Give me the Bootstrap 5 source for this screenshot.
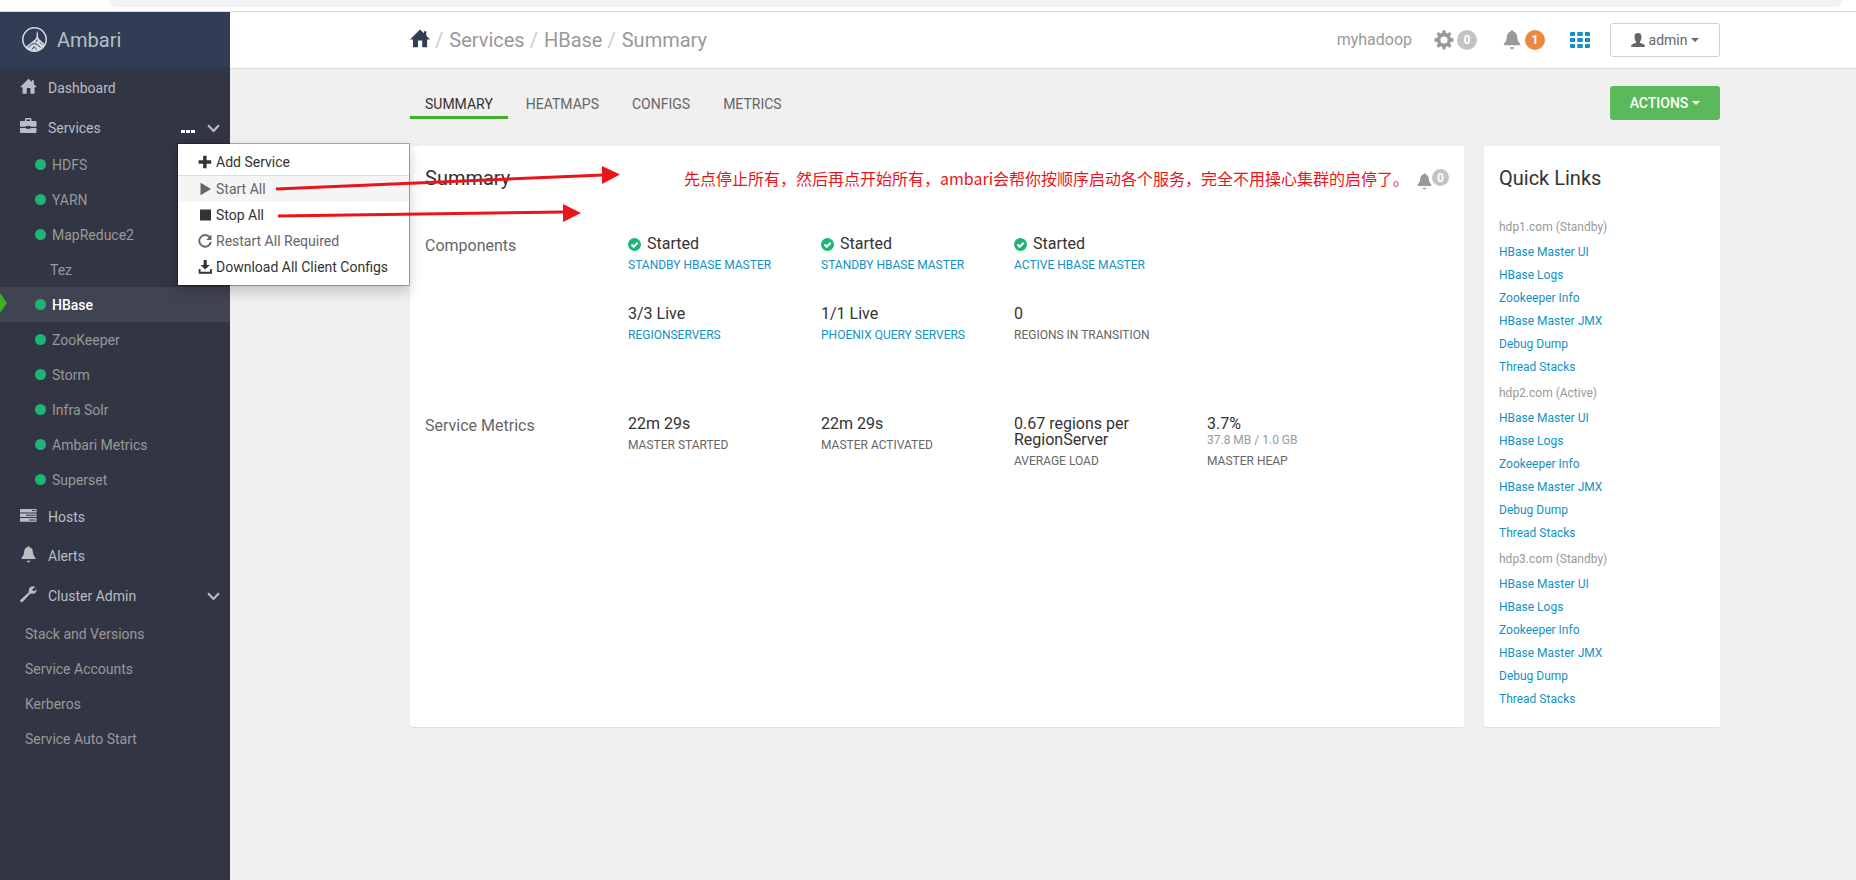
<!DOCTYPE html>
<html lang="en">
<head>
<meta charset="utf-8">
<meta name="viewport" content="width=device-width, initial-scale=1">
<title>Ambari - HBase Summary</title>
<link href="https://cdn.jsdelivr.net/npm/bootstrap@5.3.0/dist/css/bootstrap.min.css" rel="stylesheet">
<style>
body{font-family:Roboto,"Liberation Sans",sans-serif;font-size:14px;line-height:20px;color:#333;background:#f0f0f0}
a{text-decoration:none;color:#1491c1}
svg{fill:currentColor;display:block;flex:none}
.browser-edge{height:12px;background:#fff;border-bottom:1px solid #dadada;padding:0 14px 0 109px}
.address-bar{height:7px;background:#f1f3f4;border-radius:0 0 14px 14px}
.sidebar{width:230px;background:#323544;color:#b8bec4}
.brand{height:55px;background:#313d54;padding-left:22px;gap:10px;font-size:20px;color:#b8bec4}
.menu-row{height:40px;padding:2px 10px 0 20px;color:#b8bec4}
.sub-row+.menu-row,.sub-row+.menu-row~.menu-row{padding-top:0}
.sub-row+.menu-row{height:39px}
.menu-row>a{color:inherit;display:flex;gap:11px;align-items:center}
.menu-row a svg{margin-top:-4px}
.plain-btn{border:0;background:none;padding:0;color:inherit}
.sub-row{height:35px;padding:0 0 0 35px;gap:6px;color:#999;display:flex;align-items:center}
.sub-row.no-dot{padding-left:50px}
.sub-row.admin{padding-left:25px}
.dot{width:11px;height:11px;border-radius:50%;background:#1eb475}
.sub-row.current{background:#404351;color:#fff;font-weight:500;position:relative}
.sub-row.current::before{content:"";position:absolute;left:0;top:6px;border:solid transparent;border-width:10px 0 10px 7px;border-left-color:#3fae2a}
.service-menu{display:block;left:177px;top:131px;width:233px;padding:5px 0;border:1px solid rgba(0,0,0,.3);border-radius:0;box-shadow:0 6px 12px rgba(0,0,0,.18);font-size:14px;z-index:5}
.service-menu .dropdown-item{height:26px;padding:0 20px;display:flex;align-items:center;gap:4px;color:#333}
.service-menu .dropdown-item.muted{color:#666}
.service-menu .dropdown-item.hovered{background:#f5f5f5}
.service-menu .dropdown-divider{margin:0;border-color:#ddd;opacity:1}
.page-pad{padding-left:180px;padding-right:136px}
.topbar{height:57px;background:#fff;border-bottom:1px solid #ddd}
.crumbs{font-size:20px;color:#999}
.crumbs a{color:#999}
.crumbs i{color:#ccc;font-style:normal;margin:0 6px 0 5px}
.crumbs svg{color:#313d54}
.top-tools{color:#999;gap:25px}
.cluster-tool{gap:22px}
.counted{display:flex;align-items:center;gap:3px}
.top-tools .admin-btn{margin-left:-5px}
.round-count{width:20px;height:20px;border-radius:50%;background:#c3c3c3;color:#fff;font-size:12px;font-weight:700;display:flex;align-items:center;justify-content:center}
.round-count.warn{background:#e98a40}
.round-count.compact{width:17px;height:17px}
.wide-btn{width:110px;height:34px;padding:0;font-size:14px;border-radius:3px;display:flex;align-items:center;justify-content:center;gap:4px}
.admin-btn,.admin-btn:hover{background:#fff;border:1px solid #cfd3d7;color:#666}
.actions-btn,.actions-btn:hover{background:#5cb85c;border:0;color:#fff;font-weight:500}
.caret-down{border:4px solid transparent;border-top-color:currentColor;border-bottom:0}
.tab-row{padding-top:17px;margin-bottom:26px}
.tabs{gap:3px}
.tabs .nav-link{height:33px;padding:8px 15px 0;color:#666;border-bottom:3px solid transparent;line-height:20px}
.tabs .nav-link.active{color:#333;border-color:#3fae2a}
.panel-row{gap:20px}
.panel-box{background:#fff;border-radius:3px;box-shadow:0 1px 1px rgba(0,0,0,.08);padding:20px 15px 16px}
.quick-panel{width:236px}
.panel-box h2{font-size:20px;line-height:24px;margin:0;font-weight:400}
.stats{display:grid;grid-template-columns:203px repeat(4,193fr) 49fr;padding-top:46px}
.stats h3{font-size:16px;line-height:20px;color:#666;font-weight:400;margin:0;grid-row:span 2}
.stat{height:70px}
.stat-value{font-size:16px;line-height:16px;display:flex;gap:6px;align-items:center;margin-bottom:5px}
.stat-value svg{color:#1eb475}
.stat-value.stacked{margin-bottom:0}
.stat-sub{font-size:12px;line-height:16px;color:#999;margin-bottom:5px}
.stat-name{font-size:12px;line-height:17px;color:#666;text-transform:uppercase;display:block}
a.stat-name{color:#1491c1}
.stats.metrics{padding-top:40px}
.quick{font-size:12px;padding-top:23px}
.quick h4{font-size:12px;line-height:28px;font-weight:400;color:#999;margin:0}
.quick a{display:block;line-height:23px}
.panel-alert{color:#999;padding-top:3px}
.panel-alert svg{margin-top:4px}
.note{position:absolute;left:274px;top:20px;color:#ec141b;font:16px/24px "Noto Sans CJK SC",sans-serif;white-space:nowrap}
.arrows{position:absolute;left:270px;top:150px;z-index:9;pointer-events:none}
</style>
</head>
<body class="d-flex flex-column min-vh-100 position-relative">
<svg width="0" height="0" class="position-absolute" aria-hidden="true">
<symbol id="i-home" viewBox="0 0 18 17"><path d="M9 0.3 12.5 3.8V2h2.2v4L18 9.3H15.4V16.3H11V10.2H7.2V16.3H2.7V9.3H0Z"/></symbol>
<symbol id="i-case" viewBox="0 0 17 16"><path d="M5 3V1.2Q5 0 6.2 0h4.1Q11.5 0 11.5 1.2V3H15.5Q16.5 3 16.5 4V8.8H10.5V8H6V8.800H0V4Q0 3 1 3ZM6.500 3H10V1.500H6.500ZM0 10H6V10.800H10.500V10H16.500V14Q16.500 15 15.500 15H1Q0 15 0 14Z"/></symbol>
<symbol id="i-hosts" viewBox="0 0 17 14"><path fill-rule="evenodd" d="M0 1h16.500v3.500H0ZM12 2v1h3.500V2ZM0 5.500h16.500V9H0ZM6 6.800v1h9.500v-1ZM0 10h16.500v3.800H0ZM9 11.500v1h6.500v-1Z"/></symbol>
<symbol id="i-bell" viewBox="0 0 16 18"><path d="M8 0.200Q9.100 0.200 9.200 1.400Q12.400 2.200 12.600 6.200Q12.600 10 15.400 12.700V13.800H0.600V12.700Q3.400 10 3.400 6.200Q3.600 2.200 6.800 1.400Q6.900 0.200 8 0.200ZM6 15.600H10Q9.600 17.400 8 17.400T6 15.600Z"/></symbol>
<symbol id="i-wrench" viewBox="0 0 17 17"><path d="M15.300 1.200 12.300 3.100 12.700 4.800 14.200 5.200 16.700 3.300Q16.700 7.200 13.300 7.800Q11.600 8 10.400 7.400L2.800 15.800Q1.800 16.700 0.700 15.900Q-0.300 14.900 0.600 13.800L8.800 6.200Q8.300 3 10.200 1.300Q12.600-.6 15.300 1.200Z"/></symbol>
<symbol id="i-down" viewBox="0 0 12 8"><path d="M1 1 6 6.200 11 1" fill="none" stroke="currentColor" stroke-width="2"/></symbol>
<symbol id="i-plus" viewBox="0 0 14 14"><path d="M5.200.7h3.400v4.600h4.600v3.400H8.600v4.600H5.200V8.700H.6V5.300h4.600Z"/></symbol>
<symbol id="i-play" viewBox="0 0 14 14"><path d="M2.500.7 13 7 2.500 13.300Z"/></symbol>
<symbol id="i-stop" viewBox="0 0 14 14"><path d="M2 1.500h11v11H2Z"/></symbol>
<symbol id="i-repeat" viewBox="0 0 14 14"><path d="M11.700 3.300A5.800 5.800 0 1 0 12.800 8" fill="none" stroke="currentColor" stroke-width="1.900"/><path d="M13.500.5V6H8.300Z"/></symbol>
<symbol id="i-save" viewBox="0 0 14 14"><path d="M5.700 0h3v5h3.100L7.200 9.500 2.600 5h3.100ZM.700 9h1.800v2.700h9.600V9h1.800v4.700H.7Z"/></symbol>
<symbol id="i-cog" viewBox="0 0 20 20"><path fill-rule="evenodd" d="M8.600.3h2.800l.4 2.500 1.600.7 2.100-1.500 2 2L16 6.100l.7 1.600 2.800.9v2.800l-2.800.6-.7 1.600 1.500 2.200-2 2-2.100-1.500-1.600.7-.4 2.600H8.600L8.200 17l-1.600-.7-2.100 1.500-2-2L4 13.600 3.300 12 .5 11.400V8.600l2.800-.9L4 6.100 2.500 4l2-2 2.100 1.500 1.600-.7ZM10 6.400a3.600 3.600 0 1 0 0 7.200 3.600 3.600 0 0 0 0-7.200Z"/></symbol>
<symbol id="i-grid" viewBox="0 0 20 16"><path d="M0 1q0-1 1-1h4v4H0ZM7.300 0h5.500v4H7.300ZM15 0h4q1 0 1 1v3h-5ZM0 6h5v4H0ZM7.300 6h5.500v4H7.300ZM15 6h5v4h-5ZM0 12h5v4H1q-1 0-1-1ZM7.300 12h5.500v4H7.300ZM15 12h5v3q0 1-1 1h-4Z"/></symbol>
<symbol id="i-user" viewBox="0 0 14 14"><path d="M7 0Q10.500 0 10.500 3.800Q10.500 7 9 8.500V9.800Q13.500 11.200 13.800 12.500V14H.2V12.500Q.5 11.200 5 9.800V8.500Q3.500 7 3.500 3.800Q3.500 0 7 0Z"/></symbol>
<symbol id="i-ok" viewBox="0 0 13 13"><circle cx="6.500" cy="6.500" r="6.500"/><path d="m3.500 6.500 2.200 2.200 4-4" stroke="#fff" stroke-width="2.200" fill="none"/></symbol>
</svg>

<div class="browser-edge"><div class="address-bar"></div></div>
<div class="d-flex flex-grow-1 position-relative">
  <nav class="sidebar flex-shrink-0" aria-label="Main">
    <a href="#" class="brand d-flex align-items-center">
      <svg width="25" height="25" viewBox="0 0 25 25"><circle cx="12.500" cy="12.500" r="11.700" fill="none" stroke="#d5dbe1" stroke-width="1.500"/><path d="M15.300 3.500 16 7v3l1.500 2.500 5 4.500Q20 24 12.500 24T3.500 20L13 12.500 14.500 10V7Z" fill="#d5dbe1"/><path d="M6.500 20.500q3-4.500 6-4t6 4M10 22.500l2-3 2.500 3M15.300 12.500l-1.500 3M18 15.500l2 2" fill="none" stroke="#313d54" stroke-width="1"/></svg>
      <span>Ambari</span>
    </a>
    <div class="menu-row d-flex align-items-center"><a href="#"><svg width="17" height="17"><use href="#i-home"/></svg>Dashboard</a></div>
    <div class="menu-row d-flex align-items-center"><a href="#"><svg width="17" height="16"><use href="#i-case"/></svg>Services</a>
      <button class="plain-btn ms-auto me-2 text-white pe-1" aria-label="Service actions"><svg width="14" height="4" viewBox="0 0 14 4" class="mt-2"><path d="M0 0h4v3H0ZM5 0h4v3H5ZM10 0h4v3h-4Z"/></svg></button>
      <button class="plain-btn" aria-label="Collapse services"><svg width="13" height="9"><use href="#i-down"/></svg></button></div>
    <a href="#" class="sub-row"><span class="dot"></span>HDFS</a>
    <a href="#" class="sub-row"><span class="dot"></span>YARN</a>
    <a href="#" class="sub-row"><span class="dot"></span>MapReduce2</a>
    <a href="#" class="sub-row no-dot">Tez</a>
    <a href="#" class="sub-row current"><span class="dot"></span>HBase</a>
    <a href="#" class="sub-row"><span class="dot"></span>ZooKeeper</a>
    <a href="#" class="sub-row"><span class="dot"></span>Storm</a>
    <a href="#" class="sub-row"><span class="dot"></span>Infra Solr</a>
    <a href="#" class="sub-row"><span class="dot"></span>Ambari Metrics</a>
    <a href="#" class="sub-row"><span class="dot"></span>Superset</a>
    <div class="menu-row d-flex align-items-center"><a href="#"><svg width="17" height="14"><use href="#i-hosts"/></svg>Hosts</a></div>
    <div class="menu-row d-flex align-items-center"><a href="#"><svg width="17" height="17"><use href="#i-bell"/></svg>Alerts</a></div>
    <div class="menu-row d-flex align-items-center"><a href="#"><svg width="17" height="17"><use href="#i-wrench"/></svg>Cluster Admin</a>
      <button class="plain-btn ms-auto" aria-label="Collapse cluster admin"><svg width="13" height="9"><use href="#i-down"/></svg></button></div>
    <a href="#" class="sub-row admin">Stack and Versions</a>
    <a href="#" class="sub-row admin">Service Accounts</a>
    <a href="#" class="sub-row admin">Kerberos</a>
    <a href="#" class="sub-row admin">Service Auto Start</a>
  </nav>

  <div class="dropdown-menu service-menu">
    <a class="dropdown-item" href="#"><svg width="14" height="14"><use href="#i-plus"/></svg>Add Service</a>
    <hr class="dropdown-divider">
    <a class="dropdown-item muted hovered" href="#"><svg width="14" height="14"><use href="#i-play"/></svg>Start All</a>
    <a class="dropdown-item" href="#"><svg width="14" height="14"><use href="#i-stop"/></svg>Stop All</a>
    <a class="dropdown-item muted" href="#"><svg width="14" height="14"><use href="#i-repeat"/></svg>Restart All Required</a>
    <a class="dropdown-item" href="#"><svg width="14" height="14"><use href="#i-save"/></svg>Download All Client Configs</a>
  </div>

  <main class="flex-grow-1">
    <header class="topbar page-pad d-flex align-items-center">
      <div class="crumbs d-flex align-items-center">
        <a href="#" aria-label="Home"><svg width="20" height="21" class="mb-1"><use href="#i-home"/></svg></a><i>/</i><a href="#">Services</a><i>/</i><a href="#">HBase</a><i>/</i><span>Summary</span>
      </div>
      <div class="top-tools d-flex align-items-center ms-auto">
        <div class="cluster-tool d-flex align-items-center">
          <span class="fs-6">myhadoop</span>
          <span class="counted"><svg width="20" height="20"><use href="#i-cog"/></svg><span class="round-count">0</span></span>
        </div>
        <span class="counted"><svg width="20" height="20"><use href="#i-bell"/></svg><span class="round-count warn">1</span></span>
        <a href="#" aria-label="Views"><svg width="20" height="16"><use href="#i-grid"/></svg></a>
        <button class="btn wide-btn admin-btn"><svg width="14" height="14"><use href="#i-user"/></svg>admin<span class="caret-down"></span></button>
      </div>
    </header>
    <div class="page-pad">
      <div class="tab-row d-flex justify-content-between align-items-start">
        <ul class="nav tabs">
          <li><a class="nav-link active" href="#">SUMMARY</a></li>
          <li><a class="nav-link" href="#">HEATMAPS</a></li>
          <li><a class="nav-link" href="#">CONFIGS</a></li>
          <li><a class="nav-link" href="#">METRICS</a></li>
        </ul>
        <button class="btn wide-btn actions-btn">ACTIONS<span class="caret-down"></span></button>
      </div>
      <div class="panel-row d-flex">
        <section class="panel-box flex-grow-1 position-relative">
          <div class="d-flex justify-content-between">
            <h2>Summary</h2>
            <div class="panel-alert d-flex"><svg width="15" height="17"><use href="#i-bell"/></svg><span class="round-count compact">0</span></div>
          </div>
          <div class="note" lang="zh-CN">先点停止所有，然后再点开始所有，ambari会帮你按顺序启动各个服务，完全不用操心集群的启停了。</div>
          <div class="stats">
            <h3>Components</h3>
            <div class="stat"><div class="stat-value"><svg width="13" height="13"><use href="#i-ok"/></svg>Started</div><a href="#" class="stat-name">Standby HBase Master</a></div>
            <div class="stat"><div class="stat-value"><svg width="13" height="13"><use href="#i-ok"/></svg>Started</div><a href="#" class="stat-name">Standby HBase Master</a></div>
            <div class="stat"><div class="stat-value"><svg width="13" height="13"><use href="#i-ok"/></svg>Started</div><a href="#" class="stat-name">Active HBase Master</a></div>
            <div></div><div></div>
            <div class="stat"><div class="stat-value">3/3 Live</div><a href="#" class="stat-name">RegionServers</a></div>
            <div class="stat"><div class="stat-value">1/1 Live</div><a href="#" class="stat-name">Phoenix Query Servers</a></div>
            <div class="stat"><div class="stat-value">0</div><span class="stat-name">Regions In Transition</span></div>
          </div>
          <div class="stats metrics">
            <h3>Service Metrics</h3>
            <div class="stat"><div class="stat-value">22m 29s</div><span class="stat-name">Master Started</span></div>
            <div class="stat"><div class="stat-value">22m 29s</div><span class="stat-name">Master Activated</span></div>
            <div class="stat"><div class="stat-value">0.67 regions per RegionServer</div><span class="stat-name">Average Load</span></div>
            <div class="stat"><div class="stat-value stacked">3.7%</div><div class="stat-sub">37.8 MB / 1.0 GB</div><span class="stat-name">Master Heap</span></div>
          </div>
        </section>
        <aside class="panel-box quick-panel flex-shrink-0">
          <h2>Quick Links</h2>
          <div class="quick">
            <h4>hdp1.com (Standby)</h4>
            <a href="#">HBase Master UI</a><a href="#">HBase Logs</a><a href="#">Zookeeper Info</a><a href="#">HBase Master JMX</a><a href="#">Debug Dump</a><a href="#">Thread Stacks</a>
            <h4>hdp2.com (Active)</h4>
            <a href="#">HBase Master UI</a><a href="#">HBase Logs</a><a href="#">Zookeeper Info</a><a href="#">HBase Master JMX</a><a href="#">Debug Dump</a><a href="#">Thread Stacks</a>
            <h4>hdp3.com (Standby)</h4>
            <a href="#">HBase Master UI</a><a href="#">HBase Logs</a><a href="#">Zookeeper Info</a><a href="#">HBase Master JMX</a><a href="#">Debug Dump</a><a href="#">Thread Stacks</a>
          </div>
        </aside>
      </div>
    </div>
  </main>
</div>
<svg class="arrows" width="360" height="80" viewBox="0 0 360 80" aria-hidden="true"><g fill="#ec141b" stroke="#ec141b" stroke-width="3"><path d="M6 39 333 25M8 66 294 62"/><path stroke="none" d="m332 16 18 8.500-18 9.500ZM293 54l18 9-18 9Z"/></g></svg>
<script src="https://cdn.jsdelivr.net/npm/bootstrap@5.3.0/dist/js/bootstrap.bundle.min.js"></script>
</body>
</html>
